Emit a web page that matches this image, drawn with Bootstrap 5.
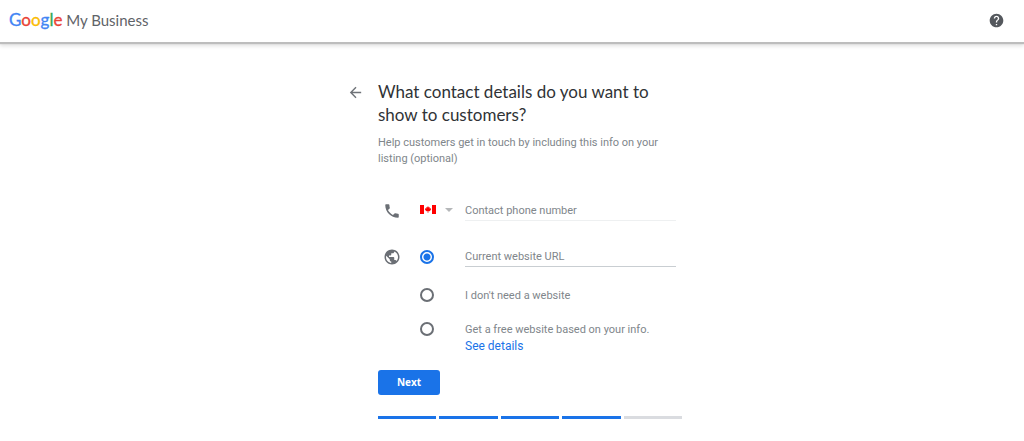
<!DOCTYPE html>
<html lang="en">
<head>
<meta charset="utf-8">
<meta name="viewport" content="width=device-width, initial-scale=1">
<title>Google My Business</title>
<link href="https://cdn.jsdelivr.net/npm/bootstrap@5.3.0/dist/css/bootstrap.min.css" rel="stylesheet">
<style>
  body { font: 11px/16px Roboto, sans-serif; color: #80868b; background: #fff; }
  .topbar { height: 42px; padding: 0 20px 2px 9px; box-shadow: 0 2px 1px #bdbdbd, 0 4px 4px rgba(0,0,0,.12); }
  .brand { font: 15px/20px Lato, sans-serif; color: #5f6368; }
  .brand-word { font-size: 17px; -webkit-text-stroke: .3px; }
  .c-blue { color: #4285f4; } .c-red { color: #ea4335; } .c-yellow { color: #fbbc05; } .c-green { color: #34a853; }
  .wizard { max-width: 340px; padding-top: 38px; }
  .back-col { width: 36px; padding: 4px 0 0 5px; }
  .title { font: 17px/23px Lato, sans-serif; color: #303336; margin-bottom: 9px; }
  .field-row { display: grid; grid-template-columns: 42px 45px 1fr; padding-right: 6px; }
  .details { padding-top: 33px; }
  .url-row { margin-top: 25px; }
  .none-row { margin-top: 21px; }
  .free-row { margin-top: 18px; }
  .row-icon { margin: 2px 0 0 5px; }
  .line-input { height: 21px; min-height: 0; padding: 1px 0 0; border: 0; border-bottom: 1px solid #eef0f1; border-radius: 0; font-size: 11px; line-height: 16px; color: #3c4043; }
  .line-input.active-line { border-bottom-color: #c9ced2; }
  .line-input:focus { box-shadow: none; border-color: #1a73e8; }
  .line-input::placeholder { color: #80868b; opacity: 1; }
  .country { appearance: none; width: 36px; height: 16px; margin-top: 1px; border: 0; padding: 0;
    background: url("data:image/svg+xml,%3Csvg xmlns='http://www.w3.org/2000/svg' width='36' height='16'%3E%3Cpath fill='%23f00' d='M0 4h4v9H0zM12 4h4v9h-4zM8 5l.8 1.4.9-.4-.1 1.5L11 7.2l-.3 1.1.5.4-1.8 1.5H8.300V12h-.6v-1.800H6.600L4.800 8.700l.5-.4L5 7.200l1.400.3L6.300 6l.9.4z'/%3E%3Cpath fill='%23b5b7b9' d='M25 7h8l-4 4z'/%3E%3C/svg%3E") no-repeat; }
  .choice { appearance: none; width: 14px; height: 14px; margin: 0; border: 2px solid #6b6f75; border-radius: 50%; background: #fff; }
  .choice:checked { border-color: #1a73e8; background: radial-gradient(circle, #1a73e8 3px, #fff 4px); }
  .details-link { color: #1a73e8; font-size: 12px; }
  .next-btn { width: 62px; height: 25px; padding: 0; border: 0; border-radius: 3px; background: #1a73e8; color: #fff; font: 700 10px/25px "Open Sans", sans-serif; }
  .steps { gap: 3px; margin-top: 21px; }
  .step { height: 3px; background: #dadce0; }
  .step.done { background: #1a73e8; }
</style>
</head>
<body>
<header class="topbar d-flex align-items-center justify-content-between">
  <a href="#" class="brand text-decoration-none"><span class="brand-word"><span class="c-blue">G</span><span class="c-red">o</span><span class="c-yellow">o</span><span class="c-blue">g</span><span class="c-green">l</span><span class="c-red">e</span></span> My Business</a>
  <a href="#" class="d-flex" aria-label="Help"><svg width="15" height="15" viewBox="1 1 22 22" fill="#54585d"><path d="M12 2C6.480 2 2 6.480 2 12s4.480 10 10 10 10-4.480 10-10S17.520 2 12 2zm1 17h-2v-2h2v2zm2.070-7.750l-.9.920C13.450 12.900 13 13.500 13 15h-2v-.5c0-1.100.450-2.100 1.170-2.830l1.240-1.260c.370-.360.590-.860.590-1.410 0-1.100-.9-2-2-2s-2 .9-2 2H8c0-2.210 1.790-4 4-4s4 1.790 4 4c0 .880-.360 1.680-.930 2.250z"/></svg></a>
</header>
<main class="wizard container-fluid d-flex px-0 mx-auto">
  <div class="back-col flex-shrink-0"><a href="#" class="d-flex" aria-label="Back"><svg width="17" height="17" viewBox="0 0 24 24" fill="#6f7378"><path d="M20 11H7.830l5.590-5.590L12 4l-8 8 8 8 1.410-1.410L7.830 13H20v-2z"/></svg></a></div>
  <form class="flex-grow-1">
    <h1 class="title">What contact details do you want to show to customers?</h1>
    <p class="mb-0">Help customers get in touch by including this info on your listing (optional)</p>
    <div class="details">
      <div class="field-row">
        <svg class="row-icon" width="18" height="18" viewBox="0 0 24 24" fill="#6b6f75"><path d="M6.620 10.790c1.440 2.830 3.760 5.140 6.590 6.590l2.200-2.200c.270-.270.670-.360 1.020-.240 1.120.370 2.330.570 3.570.570.550 0 1 .450 1 1V20c0 .550-.450 1-1 1-9.390 0-17-7.610-17-17 0-.550.450-1 1-1h3.500c.550 0 1 .450 1 1 0 1.250.2 2.450.570 3.570.110.350.030.740-.250 1.020l-2.200 2.200z"/></svg>
        <select class="country" aria-label="Country"><option aria-label="Canada" value="CA"></option></select>
        <input type="tel" class="line-input form-control" placeholder="Contact phone number" aria-label="Contact phone number">
      </div>
      <div class="field-row url-row">
        <svg class="row-icon" width="18" height="18" viewBox="0 0 24 24" fill="#6b6f75"><path d="M12 2C6.480 2 2 6.480 2 12s4.480 10 10 10 10-4.480 10-10S17.520 2 12 2zm-1 17.930c-3.950-.490-7-3.850-7-7.930 0-.620.080-1.210.210-1.790L9 15v1c0 1.100.9 2 2 2v1.930zm6.900-2.540c-.260-.810-1-1.390-1.900-1.390h-1v-3c0-.550-.450-1-1-1H8v-2h2c.550 0 1-.450 1-1V7h2c1.100 0 2-.9 2-2v-.410c2.930 1.190 5 4.060 5 7.410 0 2.080-.8 3.970-2.100 5.390z"/></svg>
        <input type="radio" name="site" class="choice mt-1" aria-label="Current website URL" checked>
        <input type="url" class="line-input active-line form-control" placeholder="Current website URL" aria-label="Website address">
      </div>
      <div class="field-row none-row">
        <span></span>
        <input type="radio" name="site" id="none" class="choice">
        <label for="none">I don't need a website</label>
      </div>
      <div class="field-row free-row">
        <span></span>
        <input type="radio" name="site" id="free" class="choice">
        <div><label for="free">Get a free website based on your info.</label><a href="#" class="details-link d-block text-decoration-none">See details</a></div>
      </div>
    </div>
    <button type="button" class="next-btn btn d-block mt-3">Next</button>
    <div class="steps d-flex" role="progressbar" aria-label="Setup progress" aria-valuemin="0" aria-valuemax="5" aria-valuenow="4">
      <div class="step done flex-fill"></div><div class="step done flex-fill"></div><div class="step done flex-fill"></div><div class="step done flex-fill"></div><div class="step flex-fill"></div>
    </div>
  </form>
</main>
<script src="https://cdn.jsdelivr.net/npm/bootstrap@5.3.0/dist/js/bootstrap.bundle.min.js"></script>
</body>
</html>
